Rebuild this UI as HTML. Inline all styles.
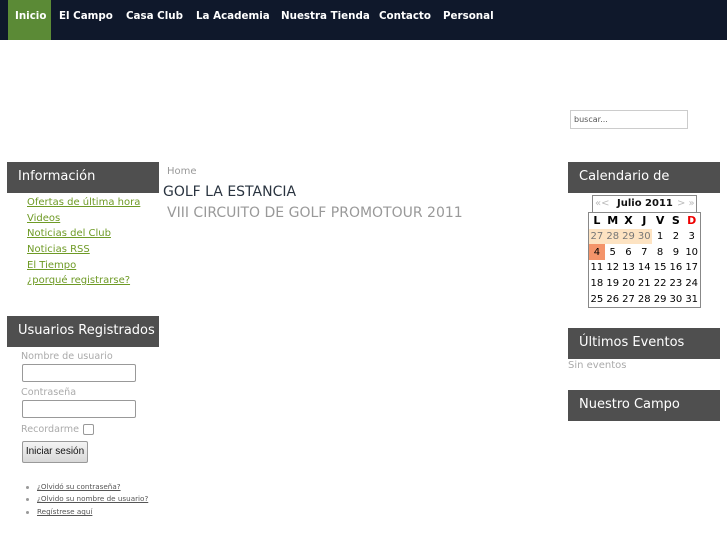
<!DOCTYPE html>
<html><head><style>
body{margin:0;width:727px;height:545px;background:#fff;font-family:"DejaVu Sans","Liberation Sans",sans-serif;position:relative;overflow:hidden}
.a{position:absolute}
.nav{left:0;top:0;width:727px;height:40px;background:#0f182b}
.nav span{position:absolute;top:0;height:40px;line-height:33px;color:#fff;font-weight:bold;font-size:10.3px}
.hd{position:absolute;background:#4f4f4f;color:#fff;font-size:13px;height:31px;line-height:30px;padding-left:11px;box-sizing:border-box;white-space:nowrap;overflow:hidden}
.lk{position:absolute;left:27px;font-size:10px;color:#6e9a25;text-decoration:underline}
.lbl{position:absolute;left:21px;font-size:9.6px;color:#aaa}
.in{position:absolute;left:22px;width:112px;height:16px;border:1px solid #999;border-radius:2px;background:#fff}
.sm{position:absolute;left:37px;font-size:7.2px;color:#555;text-decoration:underline}
.dot{position:absolute;left:26px;width:3px;height:3px;border-radius:50%;background:#999}
table{border-collapse:collapse;font-size:10px}
td{width:15.8px;height:15.7px;padding:0;text-align:center}
</style></head><body>
<div class="a nav">
<div class="a" style="left:8px;top:0;width:43px;height:40px;background:#5b8a36"></div>
<span style="left:15px">Inicio</span><span style="left:59px">El Campo</span><span style="left:126px">Casa Club</span><span style="left:196px">La Academia</span><span style="left:281px">Nuestra Tienda</span><span style="left:379px">Contacto</span><span style="left:443px">Personal</span>
</div>
<div class="a" style="left:570px;top:110px;width:113px;height:17px;border:1px solid #ccc;font-size:8px;color:#555;line-height:17px;padding-left:3px">buscar...</div>

<div class="hd" style="left:7px;top:162px;width:152px">Información</div>
<div class="lk" style="top:197px">Ofertas de última hora</div>
<div class="lk" style="top:213px">Videos</div>
<div class="lk" style="top:228px">Noticias del Club</div>
<div class="lk" style="top:244px">Noticias RSS</div>
<div class="lk" style="top:260px">El Tiempo</div>
<div class="lk" style="top:275px">¿porqué registrarse?</div>

<div class="a" style="left:167px;top:166px;font-size:10px;color:#999">Home</div>
<div class="a" style="left:163px;top:184px;font-size:14px;color:#2a3440">GOLF LA ESTANCIA</div>
<div class="a" style="left:167px;top:205px;font-size:14px;color:#999">VIII CIRCUITO DE GOLF PROMOTOUR 2011</div>

<div class="hd" style="left:7px;top:316px;width:152px">Usuarios Registrados</div>
<div class="lbl" style="top:351px">Nombre de usuario</div>
<div class="in" style="top:364px"></div>
<div class="lbl" style="top:387px">Contraseña</div>
<div class="in" style="top:400px"></div>
<div class="lbl" style="top:424px">Recordarme</div>
<div class="a" style="left:83px;top:424px;width:9px;height:9px;border:1px solid #999;border-radius:2px"></div>
<div class="a" style="left:22px;top:441px;width:64px;height:20px;border:1px solid #999;border-radius:2px;background:linear-gradient(#f4f4f4,#d8d8d8);font-family:'Liberation Sans',sans-serif;font-size:10px;line-height:20px;text-align:center;color:#111">Iniciar sesión</div>
<div class="dot" style="top:486px"></div><div class="sm" style="top:482px">¿Olvidó su contraseña?</div>
<div class="dot" style="top:498px"></div><div class="sm" style="top:494px">¿Olvido su nombre de usuario?</div>
<div class="dot" style="top:511px"></div><div class="sm" style="top:507px">Regístrese aquí</div>

<div class="hd" style="left:568px;top:162px;width:152px">Calendario de</div>
<div class="a" style="left:592px;top:195px;width:103px;height:16px;border:1px solid #888;font-size:10px;line-height:16px">
<span class="a" style="left:2px;color:#bbb">«&lt;</span><b class="a" style="left:24px;color:#111">Julio 2011</b><span class="a" style="left:84px;color:#bbb">&gt; »</span></div>
<div class="a" style="left:588px;top:212px;border:1px solid #888">
<table>
<tr style="font-weight:bold;font-size:11px"><td>L</td><td>M</td><td>X</td><td>J</td><td>V</td><td>S</td><td style="color:#e00">D</td></tr>
<tr><td style="background:#fde3c2;color:#777">27</td><td style="background:#fde3c2;color:#777">28</td><td style="background:#fde3c2;color:#777">29</td><td style="background:#fde3c2;color:#777">30</td><td>1</td><td>2</td><td>3</td></tr>
<tr><td style="background:#f4946a">4</td><td>5</td><td>6</td><td>7</td><td>8</td><td>9</td><td>10</td></tr>
<tr><td>11</td><td>12</td><td>13</td><td>14</td><td>15</td><td>16</td><td>17</td></tr>
<tr><td>18</td><td>19</td><td>20</td><td>21</td><td>22</td><td>23</td><td>24</td></tr>
<tr><td>25</td><td>26</td><td>27</td><td>28</td><td>29</td><td>30</td><td>31</td></tr>
</table></div>

<div class="hd" style="left:568px;top:328px;width:152px">Últimos Eventos</div>
<div class="a" style="left:568px;top:360px;font-size:10px;color:#aaa">Sin eventos</div>
<div class="hd" style="left:568px;top:390px;width:152px">Nuestro Campo</div>
</body></html>
